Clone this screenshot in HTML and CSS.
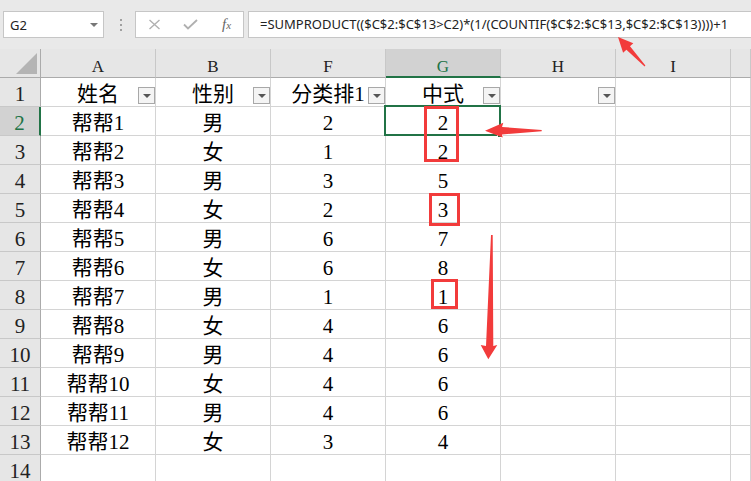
FILE: index.html
```html
<!DOCTYPE html>
<html lang="zh-CN">
<head>
    <meta charset="UTF-8">
    <title>中式排名</title>
    <link rel="stylesheet" href="styles.css">
</head>
<body>
<div class="toolbar">
    <div class="namebox">
        <span>G2</span>
        <i class="caret"></i>
    </div>
    <div class="grip"><i></i><i></i><i></i></div>
    <div class="fxbox">
        <svg width="13" height="11" viewBox="0 0 13 11"><path d="M1.5 1L11.5 10M11.5 1L1.5 10" stroke="#b0b0b0" stroke-width="1.4" fill="none"/></svg>
        <svg width="15" height="11" viewBox="0 0 15 11"><path d="M1 5.5L5 9.5L14 1" stroke="#b0b0b0" stroke-width="1.8" fill="none"/></svg>
        <span class="fx">f<sub>x</sub></span>
    </div>
    <div class="formula">=SUMPRODUCT(($C$2:$C$13&gt;C2)*(1/(COUNTIF($C$2:$C$13,$C$2:$C$13))))+1</div>
</div>

<div class="sheet">
    <div class="row head">
        <div class="corner"><svg width="22" height="22" viewBox="0 0 22 22"><path d="M0 21L21 0V21Z" fill="#b4b4b4"/></svg></div>
        <div class="ch">A</div>
        <div class="ch">B</div>
        <div class="ch">F</div>
        <div class="ch active">G</div>
        <div class="ch">H</div>
        <div class="ch">I</div>
        <div class="ch"></div>
    </div>
    <div class="row">
        <div class="rh">1</div>
        <div class="cell">姓名<i class="filter"></i></div>
        <div class="cell">性别<i class="filter"></i></div>
        <div class="cell">分类排1<i class="filter"></i></div>
        <div class="cell">中式<i class="filter"></i></div>
        <div class="cell"><i class="filter"></i></div>
        <div class="cell"></div>
        <div class="cell"></div>
    </div>
    <div class="row">
        <div class="rh active">2</div>
        <div class="cell">帮帮1</div><div class="cell">男</div><div class="cell">2</div><div class="cell">2</div>
        <div class="cell"></div><div class="cell"></div><div class="cell"></div>
    </div>
    <div class="row">
        <div class="rh">3</div>
        <div class="cell">帮帮2</div><div class="cell">女</div><div class="cell">1</div><div class="cell">2</div>
        <div class="cell"></div><div class="cell"></div><div class="cell"></div>
    </div>
    <div class="row">
        <div class="rh">4</div>
        <div class="cell">帮帮3</div><div class="cell">男</div><div class="cell">3</div><div class="cell">5</div>
        <div class="cell"></div><div class="cell"></div><div class="cell"></div>
    </div>
    <div class="row">
        <div class="rh">5</div>
        <div class="cell">帮帮4</div><div class="cell">女</div><div class="cell">2</div><div class="cell">3</div>
        <div class="cell"></div><div class="cell"></div><div class="cell"></div>
    </div>
    <div class="row">
        <div class="rh">6</div>
        <div class="cell">帮帮5</div><div class="cell">男</div><div class="cell">6</div><div class="cell">7</div>
        <div class="cell"></div><div class="cell"></div><div class="cell"></div>
    </div>
    <div class="row">
        <div class="rh">7</div>
        <div class="cell">帮帮6</div><div class="cell">女</div><div class="cell">6</div><div class="cell">8</div>
        <div class="cell"></div><div class="cell"></div><div class="cell"></div>
    </div>
    <div class="row">
        <div class="rh">8</div>
        <div class="cell">帮帮7</div><div class="cell">男</div><div class="cell">1</div><div class="cell">1</div>
        <div class="cell"></div><div class="cell"></div><div class="cell"></div>
    </div>
    <div class="row">
        <div class="rh">9</div>
        <div class="cell">帮帮8</div><div class="cell">女</div><div class="cell">4</div><div class="cell">6</div>
        <div class="cell"></div><div class="cell"></div><div class="cell"></div>
    </div>
    <div class="row">
        <div class="rh">10</div>
        <div class="cell">帮帮9</div><div class="cell">男</div><div class="cell">4</div><div class="cell">6</div>
        <div class="cell"></div><div class="cell"></div><div class="cell"></div>
    </div>
    <div class="row">
        <div class="rh">11</div>
        <div class="cell">帮帮10</div><div class="cell">女</div><div class="cell">4</div><div class="cell">6</div>
        <div class="cell"></div><div class="cell"></div><div class="cell"></div>
    </div>
    <div class="row">
        <div class="rh">12</div>
        <div class="cell">帮帮11</div><div class="cell">男</div><div class="cell">4</div><div class="cell">6</div>
        <div class="cell"></div><div class="cell"></div><div class="cell"></div>
    </div>
    <div class="row">
        <div class="rh">13</div>
        <div class="cell">帮帮12</div><div class="cell">女</div><div class="cell">3</div><div class="cell">4</div>
        <div class="cell"></div><div class="cell"></div><div class="cell"></div>
    </div>
    <div class="row">
        <div class="rh">14</div>
        <div class="cell"></div><div class="cell"></div><div class="cell"></div><div class="cell"></div>
        <div class="cell"></div><div class="cell"></div><div class="cell"></div>
    </div>

    <!-- 选中的单元格 G2 -->
    <div class="selection"><i class="handle"></i></div>
</div>

<!-- 标注：红框和箭头 -->
<svg class="marks" width="751" height="481" viewBox="0 0 751 481">
    <g fill="none" stroke="#f23b3b" stroke-width="3">
        <rect x="425.5" y="107.5" width="32" height="53"/>
        <rect x="430.5" y="194.5" width="28" height="30"/>
        <rect x="432.5" y="280.5" width="24" height="27"/>
    </g>
    <g fill="#f23b3b">
        <polygon points="618,37 633.3,43.2 630,46.3 645.4,65.6 644.6,66.4 626.4,49.7 623.1,52.8"/>
        <polygon points="485,130.7 503.3,122.7 502,127 541.7,130 541.7,131.3 502,134.5 502.7,137.5"/>
        <polygon points="491,235 492.7,235 493.3,346 497.3,345 488.3,359.3 480.7,345 486,346"/>
    </g>
</svg>
</body>
</html>
```

FILE: styles.css
```css
* {
    box-sizing: border-box;
}

body {
    margin: 0;
    width: 751px;
    height: 481px;
    overflow: hidden;
    background: #fff;
    position: relative;
    font-family: "Liberation Serif", "Noto Sans CJK SC", serif;
}

/* 编辑栏 */
.toolbar {
    height: 49px;
    background: #e9e9e9;
    display: flex;
    align-items: flex-start;
    padding: 11px 0 0 3px;
    font-family: "Noto Sans", "Noto Sans CJK SC", sans-serif;
    font-size: 13px;
    color: #222;
}

.namebox {
    width: 101px;
    height: 27px;
    background: #fff;
    border: 1px solid #c6c6c6;
    display: flex;
    align-items: center;
    justify-content: space-between;
    padding: 0 5px 0 6px;
}

.caret {
    width: 0;
    height: 0;
    border-left: 4px solid transparent;
    border-right: 4px solid transparent;
    border-top: 4px solid #777;
}

.grip {
    width: 31px;
    height: 27px;
    display: flex;
    flex-direction: column;
    align-items: center;
    justify-content: center;
    gap: 3px;
    padding-left: 2px;
}

.grip i {
    width: 2px;
    height: 2px;
    background: #a0a0a0;
}

.fxbox {
    width: 109px;
    height: 27px;
    background: #fff;
    border: 1px solid #c6c6c6;
    display: flex;
    align-items: center;
    padding-left: 12px;
    gap: 22px;
}

.fx {
    font-family: "Liberation Serif", serif;
    font-style: italic;
    font-size: 15px;
    color: #666;
    margin-left: 2px;
}

.fx sub {
    font-size: 11px;
    vertical-align: 0;
}

.formula {
    flex: 1;
    height: 27px;
    margin-left: 4px;
    margin-right: -2px;
    background: #fff;
    border: 1px solid #c6c6c6;
    padding-left: 11px;
    line-height: 25px;
    white-space: nowrap;
}

/* 表格 */
.sheet {
    position: relative;
}

.row {
    display: grid;
    grid-template-columns: 41px repeat(6, 115px) 1fr;
}

.corner,
.ch {
    height: 29px;
    background: #e6e6e6;
    border-right: 1px solid #c8c8c8;
    border-bottom: 1px solid #ababab;
}

.corner {
    border-right-color: #ababab;
    padding: 4px 0 0 16px;
}

.ch {
    text-align: center;
    font-size: 17px;
    line-height: 20px;
    padding-top: 8px;
    color: #222;
}

.ch.active {
    background: #d2d2d2;
    color: #217346;
    border-bottom: 2px solid #217346;
}

.rh,
.cell {
    height: 29px;
    font-size: 21px;
    line-height: 21px;
    padding-top: 6px;
    text-align: center;
    white-space: nowrap;
}

.rh {
    background: #e6e6e6;
    border-right: 1px solid #ababab;
    border-bottom: 1px solid #c8c8c8;
    color: #222;
}

.rh.active {
    background: #d2d2d2;
    color: #217346;
    border-right: 2px solid #217346;
}

.cell {
    position: relative;
    border-right: 1px solid #d4d4d4;
    border-bottom: 1px solid #d4d4d4;
    color: #000;
}

.filter {
    position: absolute;
    right: 0;
    bottom: 2px;
    width: 17px;
    height: 17px;
    background: #f4f4f4;
    border: 1px solid #a8a8a8;
}

.filter::after {
    content: "";
    position: absolute;
    left: 4px;
    top: 6px;
    border-left: 4px solid transparent;
    border-right: 4px solid transparent;
    border-top: 4px solid #555;
}

.selection {
    position: absolute;
    left: 384px;
    top: 56px;
    width: 117px;
    height: 31px;
    border: 2px solid #217346;
}

.handle {
    position: absolute;
    right: -4px;
    bottom: -4px;
    width: 6px;
    height: 6px;
    background: #217346;
    border: 1px solid #fff;
}

.marks {
    position: absolute;
    left: 0;
    top: 0;
}
```
